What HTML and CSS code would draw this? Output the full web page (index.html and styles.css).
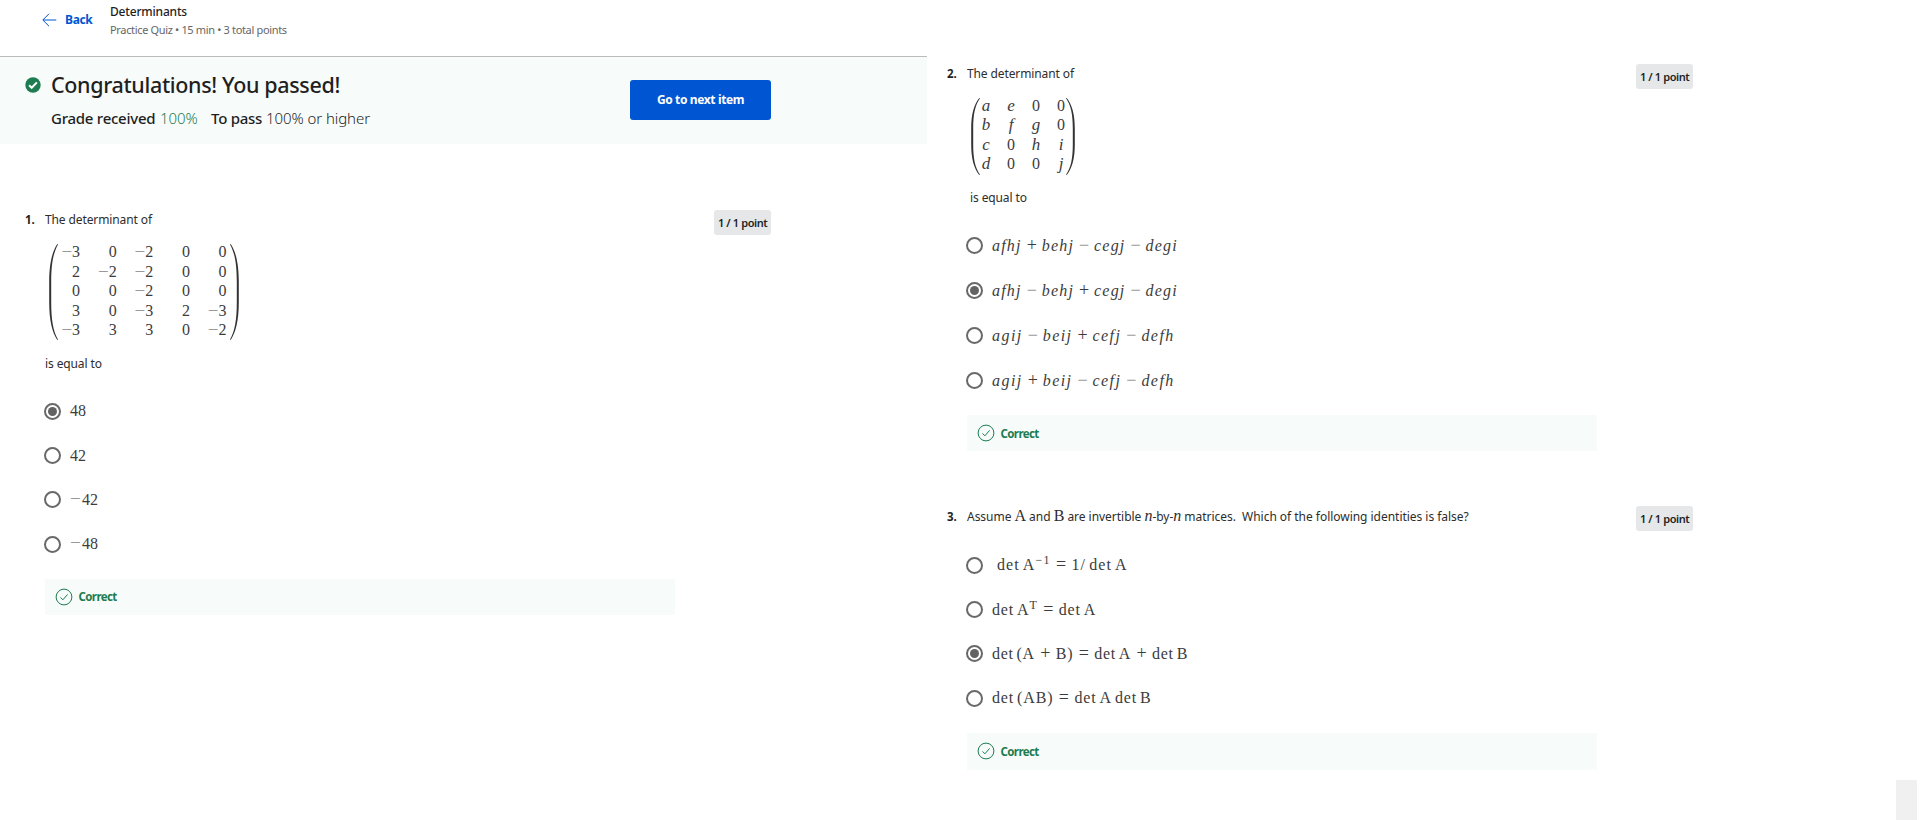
FILE: index.html
```html
<!DOCTYPE html>
<html lang="en">
<head>
<meta charset="utf-8">
<title>Determinants</title>
<link rel="stylesheet" href="styles.css">
</head>
<body>
<svg width="0" height="0" class="defs">
  <symbol id="ok" viewBox="0 0 18 18"><circle cx="9" cy="9" r="7.9"/><path d="M5.5 9.4l2.4 2.4 4.7-5.4"/></symbol>
  <symbol id="paren" viewBox="0 0 9 96" preserveAspectRatio="none"><path d="M8.3 0C3 8 .2 20 .2 38V58C.2 76 3 88 8.3 96L9 95.6C4.2 87 2.2 76 2.2 58V38C2.2 20 4.2 9 9 .4Z"/></symbol>
</svg>
<div class="page">
  <div class="col left">
    <header class="top">
      <a class="back"><svg width="15" height="14" viewBox="0 0 15 14"><path d="M14.3 7H1M7 .8L.8 7 7 13.2"/></svg><span class="t back-t">Back</span></a>
      <div class="titles"><div class="title">Determinants</div><div class="sub">Practice Quiz • 15 min • 3 total points</div></div>
    </header>
    <section class="banner">
      <svg class="pass" width="16" height="16" viewBox="0 0 16 16"><circle cx="8" cy="8" r="7.7"/><path d="M4.1 8.3l2.6 2.5 5.2-5.4"/></svg>
      <div class="result">
        <div class="congrats">Congratulations! You passed!</div>
        <div class="grades"><span class="t g1">Grade received</span><span class="t g2">100%</span><span class="t g3">To pass</span><span class="t g4">100% or higher</span></div>
      </div>
      <button class="next">Go to next item</button>
    </section>
    <section class="q q1">
      <div class="num">1.</div>
      <div class="body">
        <div class="prompt">The determinant of</div>
        <div class="matrix m1"><svg class="pl"><use href="#paren"/></svg>
          <div class="cells">
            <i>−</i><b>3</b><i></i><b>0</b><i>−</i><b>2</b><i></i><b>0</b><i></i><b>0</b>
            <i></i><b>2</b><i>−</i><b>2</b><i>−</i><b>2</b><i></i><b>0</b><i></i><b>0</b>
            <i></i><b>0</b><i></i><b>0</b><i>−</i><b>2</b><i></i><b>0</b><i></i><b>0</b>
            <i></i><b>3</b><i></i><b>0</b><i>−</i><b>3</b><i></i><b>2</b><i>−</i><b>3</b>
            <i>−</i><b>3</b><i></i><b>3</b><i></i><b>3</b><i></i><b>0</b><i>−</i><b>2</b>
          </div>
          <svg class="pr"><use href="#paren"/></svg></div>
        <div class="equal">is equal to</div>
        <div class="opts">
          <label><span class="radio on"></span><span class="math">48</span></label>
          <label><span class="radio"></span><span class="math">42</span></label>
          <label><span class="radio"></span><span class="math"><i class="neg">−</i>42</span></label>
          <label><span class="radio"></span><span class="math"><i class="neg">−</i>48</span></label>
        </div>
        <div class="correct"><svg width="18" height="18"><use href="#ok"/></svg><span>Correct</span></div>
      </div>
      <div class="badge">1 / 1 point</div>
    </section>
  </div>
  <div class="col right">
    <section class="q q2">
      <div class="num">2.</div>
      <div class="body">
        <div class="prompt">The determinant of</div>
        <div class="matrix m2"><svg class="pl"><use href="#paren"/></svg>
          <div class="cells">
            <em>a</em><em>e</em><b>0</b><b>0</b>
            <em>b</em><em>f</em><em>g</em><b>0</b>
            <em>c</em><b>0</b><em>h</em><em>i</em>
            <em>d</em><b>0</b><b>0</b><em>j</em>
          </div>
          <svg class="pr"><use href="#paren"/></svg></div>
        <div class="equal">is equal to</div>
        <div class="opts">
          <label><span class="radio"></span><span class="math it">afhj<i class="op">+</i>behj<i class="op mi">−</i>cegj<i class="op mi">−</i>degi</span></label>
          <label><span class="radio on"></span><span class="math it">afhj<i class="op mi">−</i>behj<i class="op">+</i>cegj<i class="op mi">−</i>degi</span></label>
          <label><span class="radio"></span><span class="math it wide">agij<i class="op mi">−</i>beij<i class="op">+</i>cefj<i class="op mi">−</i>defh</span></label>
          <label><span class="radio"></span><span class="math it wide">agij<i class="op">+</i>beij<i class="op mi">−</i>cefj<i class="op mi">−</i>defh</span></label>
        </div>
        <div class="correct"><svg width="18" height="18"><use href="#ok"/></svg><span>Correct</span></div>
      </div>
      <div class="badge">1 / 1 point</div>
    </section>
    <section class="q q3">
      <div class="num">3.</div>
      <div class="body">
        <div class="prompt">Assume <span class="var">A</span> and <span class="var">B</span> are invertible <em>n</em>-by-<em>n</em> matrices.&nbsp; Which of the following identities is false?</div>
        <div class="opts">
          <label class="shift"><span class="radio"></span><span class="math up">det<u></u>A<sup>−1</sup><i class="op">=</i>1/<u></u>det<u></u>A</span></label>
          <label><span class="radio"></span><span class="math up">det<u></u>A<sup>T</sup><i class="op">=</i>det<u></u>A</span></label>
          <label><span class="radio on"></span><span class="math up sum">det<u></u><s>(</s>A<i class="op">+</i>B<s>)</s><i class="op">=</i>det<u></u>A<i class="op">+</i>det<u></u>B</span></label>
          <label><span class="radio"></span><span class="math up">det<u></u><s>(</s>AB<s>)</s><i class="op">=</i>det<u></u>A<u></u>det<u></u>B</span></label>
        </div>
        <div class="correct"><svg width="18" height="18"><use href="#ok"/></svg><span>Correct</span></div>
      </div>
      <div class="badge">1 / 1 point</div>
    </section>
    <div class="corner"></div>
  </div>
</div>
</body>
</html>
```
FILE: styles.css
```css
* { box-sizing: border-box; }
body { margin: 0; width: 1920px; height: 820px; overflow: hidden; background: #fff; color: #1f1f1f; font-family: "Noto Sans", sans-serif; font-size: 12.5px; }
.defs { position: absolute; }
.page { display: flex; height: 820px; }
.col { display: flex; flex-direction: column; }
.left { width: 927px; }
.right { width: 993px; }
.t { white-space: pre; }
i { font-style: normal; }
.top { height: 57px; border-bottom: 1px solid #bbb; display: flex; padding-left: 42px; }
.back { display: flex; align-items: center; height: 40px; width: 69px; gap: 8px; color: #0056d2; font-weight: 700; }
.back svg { fill: none; stroke: #0056d2; stroke-width: 1; }
.back-t { font-size: 12px; line-height: 40px; height: 40px; letter-spacing: -.33px; }
.titles { padding-top: 3px; line-height: 18px; white-space: nowrap; }
.title { font-size: 12px; font-weight: 500; letter-spacing: -.18px; margin-left: -1px; }
.sub { font-size: 11px; color: #666; letter-spacing: -.34px; margin-left: -1px; }
.banner { height: 87px; background: #f7fbfa; display: flex; padding-left: 24.5px; }
.pass { margin-top: 20px; }
.pass circle { fill: #1d7c50; }
.pass path { fill: none; stroke: #fff; stroke-width: 2; }
.result { width: 579px; margin-left: 10.5px; padding-top: 13px; }
.congrats { line-height: 30px; font-size: 21.5px; font-weight: 500; height: 33px; letter-spacing: -.35px; }
.grades { line-height: 30px; font-size: 15px; display: flex; height: 30px; }
.g1, .g3 { font-weight: 500; letter-spacing: -.25px; }
.g2, .g4 { font-weight: 300; letter-spacing: -.07px; }
.g1 { width: 109px; }
.g2 { width: 51px; color: #1d7c50; }
.g3 { width: 55px; }
.next { margin-top: 23px; width: 141px; height: 40px; padding: 0 0 1px; border: 0; border-radius: 3px; background: #0056d2; color: #fff; font: 700 12px "Noto Sans", sans-serif; letter-spacing: -.37px; }
.q { display: flex; align-items: flex-start; }
.q1 { margin-top: 65px; padding-left: 25px; }
.q2 { margin-top: 63px; padding-left: 20px; }
.q3 { margin-top: 55px; padding-left: 20px; }
.num { width: 20px; font-size: 11.5px; font-weight: 700; line-height: 22px; height: 20px; }
.body { width: 669px; }
.prompt, .equal { line-height: 22px; height: 20px; font-size: 12px; letter-spacing: -.11px; color: #2d2d2d; white-space: nowrap; }
.q3 .prompt { letter-spacing: -.03px; }
.matrix { display: flex; margin: 15px 0 13px 4px; height: 96px; }
.matrix svg { height: 100%; width: 9px; fill: #333; flex: none; }
.pr { transform: scaleX(-1); }
.cells { display: grid; margin-top: -2px; font: 16px/19.5px "Liberation Serif", serif; color: #3c3c3c; }
.cells b { font-weight: 400; }
.m1 .cells { grid-template-columns: repeat(5, 12.6px 24px); grid-auto-rows: 19.5px; width: 170px; margin-left: 1.5px; }
.m1 i { color: #999; font-size: 19px; text-align: right; }
.m2 { height: 77px; margin-bottom: 12px; }
.m2 .cells { grid-template-columns: repeat(4, 25px); grid-auto-rows: 19.4px; width: 87px; text-align: center; margin-left: -6.5px; margin-right: 5.5px; }
.m2 em { font-size: 17px; }
.q2 .equal { padding-left: 3px; }
.opts { margin-top: 16px; }
.opts label { display: flex; align-items: center; height: 44.4px; }
.q2 .opts label { height: 45px; }
.q3 .opts { margin-top: 17px; }
.shift .math { margin-left: 5px; letter-spacing: 1.1px; }
.radio { width: 17px; height: 17px; border: 2px solid #696969; border-radius: 50%; margin: 0 9px 0 -1px; display: grid; place-items: center; }
.radio.on::after { content: ""; width: 9px; height: 9px; border-radius: 50%; background: #636363; }
.math { font: 16px/20px "Liberation Serif", serif; color: #3c3c3c; white-space: nowrap; }
.it { font-style: italic; letter-spacing: 1.2px; }
.it.wide { letter-spacing: 1.45px; }
.up { letter-spacing: .85px; }
.up.sum { letter-spacing: .68px; }
.op { display: inline-block; font-style: normal; width: 20px; text-align: center; letter-spacing: 0; font-size: 18px; line-height: 16px; }
.up .op { width: 21px; }
.mi, .neg { color: #999; }
.neg { display: inline-block; width: 12px; font-size: 19px; line-height: 16px; }
u { display: inline-block; width: 3px; text-decoration: none; }
s { text-decoration: none; }
sup { font-size: 12px; line-height: 0; vertical-align: 6px; }
.correct { margin-top: 12.4px; width: 630px; height: 36px; background: #f7fbfa; display: flex; align-items: center; padding-left: 9.5px; gap: 6px; color: #1d7c50; font-size: 11.5px; font-weight: 700; letter-spacing: -.6px; }
.q2 .correct { margin-top: 12px; }
.q3 .correct { height: 37px; }
.correct svg { fill: none; stroke: #1d7c50; stroke-width: 1; }
.badge { width: 57px; height: 25px; margin-top: 1px; border-radius: 3px; background: #e5e7e8; font-size: 11px; font-weight: 600; line-height: 25px; padding-left: 4px; letter-spacing: -.4px; white-space: nowrap; }
.q3 .badge { margin-top: 0; }
.prompt em, .var { font-family: "Liberation Serif", serif; font-size: 16px; line-height: 0; }
.corner { width: 21px; height: 40px; background: #f0f0f0; margin: auto 3px 0 auto; }
```
